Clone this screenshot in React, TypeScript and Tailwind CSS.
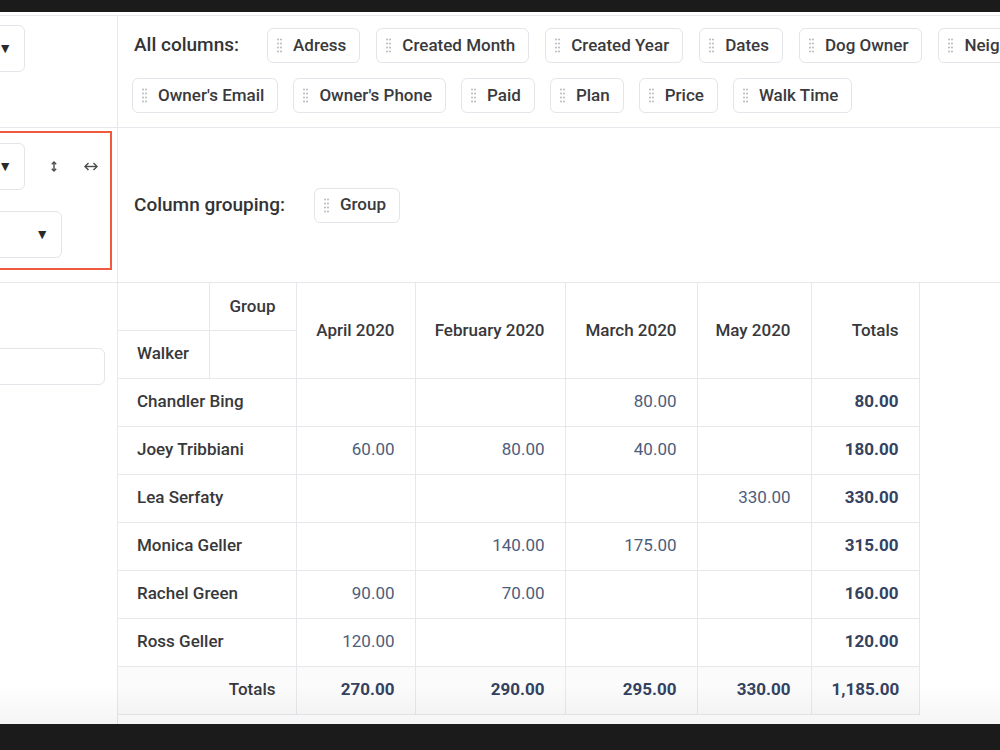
import React from "react";

const line = "border-[#e7e7ee]";

function Dots() {
  return (
    <svg width="5" height="15" viewBox="0 0 5 15" className="shrink-0">
      {[1.5, 5.5, 9.5, 13.5].map((y) => (
        <g key={y} fill="#b9b9c2">
          <circle cx="1" cy={y} r="1" />
          <circle cx="4" cy={y} r="1" />
        </g>
      ))}
    </svg>
  );
}

function Chip({ label }: { label: string }) {
  return (
    <div className="flex h-[35px] shrink-0 items-center gap-[11px] rounded-[6px] border border-[#e4e4eb] bg-white pl-[9px] pr-[13px] text-[17px] font-medium text-[#3a3a3d]">
      <Dots />
      <span>{label}</span>
    </div>
  );
}

function Select({ w, pr }: { w: string; pr: string }) {
  return (
    <div
      className={`flex h-[47px] shrink-0 items-center justify-end rounded-[6px] border border-[#e4e4eb] bg-white ${w} ${pr} text-[14px] text-[#2a2a2a]`}
    >
      ▼
    </div>
  );
}

const months = ["April 2020", "February 2020", "March 2020", "May 2020"];

const rows: { name: string; v: string[]; total: string }[] = [
  { name: "Chandler Bing", v: ["", "", "80.00", ""], total: "80.00" },
  { name: "Joey Tribbiani", v: ["60.00", "80.00", "40.00", ""], total: "180.00" },
  { name: "Lea Serfaty", v: ["", "", "", "330.00"], total: "330.00" },
  { name: "Monica Geller", v: ["", "140.00", "175.00", ""], total: "315.00" },
  { name: "Rachel Green", v: ["90.00", "70.00", "", ""], total: "160.00" },
  { name: "Ross Geller", v: ["120.00", "", "", ""], total: "120.00" },
];

const totals = ["270.00", "290.00", "295.00", "330.00", "1,185.00"];

export default function App() {
  const cell = `border-r border-b ${line} px-[20px]`;
  const head = `border-r border-b ${line} pl-[6px] pr-[20px] whitespace-nowrap text-right font-medium text-[#38383b]`;
  return (
    <div className="relative flex h-[750px] w-[1000px] flex-col overflow-hidden bg-white font-['Roboto',sans-serif] text-[#3a3a3d]">
      <div className="h-[12px] shrink-0 bg-[#1b1b1b]" />
      <div className="h-[3px] shrink-0 bg-white" />

      <div className={`grid flex-1 grid-cols-[118px_1fr] grid-rows-[112px_155px_1fr] border-t ${line}`}>
        {/* left top */}
        <div className={`overflow-hidden border-r border-b ${line}`}>
          <div className="ml-[-100px] mt-[9px]">
            <Select w="w-[125px]" pr="pr-[12px]" />
          </div>
        </div>

        {/* all columns */}
        <div className={`flex flex-col gap-[15px] overflow-hidden border-b ${line} pl-[14px] pt-[12px]`}>
          <div className="flex items-center gap-[16px] whitespace-nowrap">
            <span className="ml-[2px] mr-[12px] text-[19px] font-medium text-[#333336]">All columns:</span>
            {["Adress", "Created Month", "Created Year", "Dates", "Dog Owner", "Neighborhood"].map((c) => (
              <Chip key={c} label={c} />
            ))}
          </div>
          <div className="flex items-center gap-[15px] whitespace-nowrap">
            {["Owner's Email", "Owner's Phone", "Paid", "Plan", "Price", "Walk Time"].map((c) => (
              <Chip key={c} label={c} />
            ))}
          </div>
        </div>

        {/* left middle with red box */}
        <div className={`overflow-hidden border-r border-b ${line}`}>
          <div className="ml-[-60px] mt-[3px] h-[139px] w-[172px] border-2 border-[#f15a3c] pt-[10px]">
            <div className="flex items-center">
              <div className="ml-[8px]">
                <Select w="w-[75px]" pr="pr-[12px]" />
              </div>
              <div className="ml-[19px] flex w-[20px] justify-center">
                <svg width="8" height="11" viewBox="0 0 8 11" fill="none" stroke="#4a4a4a" strokeWidth="1.4">
                  <path d="M4 1v9" />
                  <path d="M1.8 3.2 4 1l2.2 2.2M1.8 7.8 4 10l2.2-2.2" />
                </svg>
              </div>
              <div className="ml-[17px] flex w-[20px] justify-center">
                <svg width="14" height="9" viewBox="0 0 14 9" fill="none" stroke="#4a4a4a" strokeWidth="1.4">
                  <path d="M1 4.5h12" />
                  <path d="M4.5 1 1 4.5 4.5 8M9.5 1 13 4.5 9.5 8" />
                </svg>
              </div>
            </div>
            <div className="ml-[8px] mt-[21px]">
              <Select w="w-[112px]" pr="pr-[12px]" />
            </div>
          </div>
        </div>

        {/* column grouping */}
        <div className={`flex items-center border-b ${line} pl-[16px]`}>
          <span className="mr-[13px] text-[19px] font-medium text-[#333336]">Column grouping:</span>
          <div className="ml-[16px]">
            <Chip label="Group" />
          </div>
        </div>

        {/* left bottom */}
        <div className={`overflow-hidden border-r ${line}`}>
          <div className="ml-[-60px] mt-[65px] h-[37px] w-[165px] rounded-[6px] border border-[#e4e4eb]" />
        </div>

        {/* table */}
        <div className="overflow-hidden">
          <table className="w-[801px] table-fixed border-collapse text-[17px]">
            <colgroup>
              <col className="w-[91px]" />
              <col className="w-[87px]" />
              <col className="w-[119px]" />
              <col className="w-[150px]" />
              <col className="w-[132px]" />
              <col className="w-[114px]" />
              <col className="w-[108px]" />
            </colgroup>
            <thead>
              <tr className="h-[47px]">
                <th className={cell} />
                <th className={head}>Group</th>
                {months.map((m) => (
                  <th key={m} rowSpan={2} className={head}>
                    {m}
                  </th>
                ))}
                <th rowSpan={2} className={head}>
                  Totals
                </th>
              </tr>
              <tr className="h-[48px]">
                <th className={`${cell} pl-[19px] text-left font-medium text-[#38383b]`}>Walker</th>
                <th className={cell} />
              </tr>
            </thead>
            <tbody>
              {rows.map((r) => (
                <tr key={r.name} className="h-[48px]">
                  <td colSpan={2} className={`${cell} pl-[19px] text-left font-medium text-[#38383b]`}>
                    {r.name}
                  </td>
                  {r.v.map((v, i) => (
                    <td key={i} className={`${cell} text-right text-[#4d5d7c]`}>
                      {v}
                    </td>
                  ))}
                  <td className={`${cell} text-right font-bold text-[#34425f]`}>{r.total}</td>
                </tr>
              ))}
              <tr className="h-[48px] bg-[#fbfbfc]">
                <td colSpan={2} className={`${cell} text-right font-medium text-[#38383b]`}>
                  Totals
                </td>
                {totals.map((t, i) => (
                  <td key={i} className={`${cell} text-right font-bold text-[#34425f]`}>
                    {t}
                  </td>
                ))}
              </tr>
            </tbody>
          </table>
        </div>
      </div>

      <div className="h-[26px] shrink-0 bg-[#1b1b1b]" />
      <div className="pointer-events-none absolute bottom-[26px] left-0 h-[40px] w-full bg-gradient-to-b from-transparent to-black/[0.04]" />
    </div>
  );
}
